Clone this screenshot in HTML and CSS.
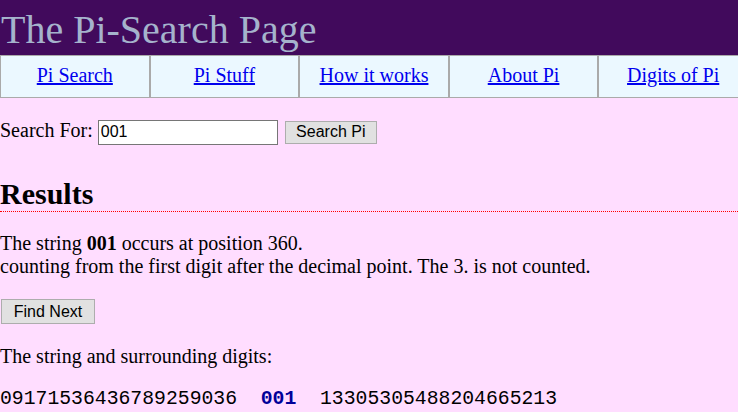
FILE: index.html
```html
<!DOCTYPE html>
<html>
<head>
<meta charset="utf-8">
<title>The Pi-Search Page</title>
<link rel="stylesheet" href="styles.css">
</head>
<body>
<div class="header"><h1 class="title">The Pi-Search Page</h1></div>
<div class="nav">
  <div class="navcell"><a href="#">Pi Search</a></div>
  <div class="navcell"><a href="#">Pi Stuff</a></div>
  <div class="navcell"><a href="#">How it works</a></div>
  <div class="navcell"><a href="#">About Pi</a></div>
  <div class="navcell"><a href="#">Digits of Pi</a></div>
</div>
<form class="search">Search For: <input class="field" type="text" value="001"> <button class="btn btn-search" type="button">Search Pi</button></form>
<h2 class="results">Results</h2>
<p class="text">The string <b>001</b> occurs at position 360.<br>counting from the first digit after the decimal point. The 3. is not counted.</p>
<p class="text text-btn"><button class="btn btn-next" type="button">Find Next</button></p>
<p class="text">The string and surrounding digits:</p>
<p class="digits">09171536436789259036  <b class="hit">001</b>  13305305488204665213</p>
</body>
</html>
```
FILE: styles.css
```css
html, body {
  margin: 0;
  padding: 0;
  overflow: hidden;
}
body {
  background: #ffddff;
  font-family: "Liberation Serif", "Times New Roman", serif;
  font-size: 20px;
  color: #000;
}
.header {
  background: #410a5c;
  height: 55px;
  box-sizing: border-box;
  padding: 7px 0 0 1px;
}
.title {
  margin: 0;
  font-size: 40px;
  font-weight: normal;
  color: #a5b3cc;
  line-height: 46px;
}
.nav {
  display: flex;
  overflow: hidden;
  width: 100%;
}
.navcell {
  flex: none;
  width: 20%;
  border: 1px solid #aaaaaa;
  background: #ebf8ff;
  text-align: center;
  padding: 8px 0 10px;
  line-height: 23px;
}
.navcell a {
  color: #0000ee;
}
.search {
  margin: 21px 0 32px;
}
.field {
  box-sizing: border-box;
  width: 180px;
  height: 25px;
  border: 1px solid #767676;
  background: #fff;
  padding: 1px 2px;
  font-family: "Liberation Sans", Arial, sans-serif;
  font-size: 16px;
  color: #000;
  vertical-align: baseline;
}
.btn {
  box-sizing: border-box;
  background: #e1e1e1;
  border: 1px solid #adadad;
  font-family: "Liberation Sans", Arial, sans-serif;
  font-size: 16px;
  color: #000;
  padding: 0;
  margin: 0;
}
.btn-search {
  width: 92px;
  height: 23px;
  margin-left: 2px;
}
.btn-next {
  width: 94px;
  height: 25px;
  margin-left: 1px;
}
.results {
  font-size: 30px;
  font-weight: bold;
  margin: 24px 0 20px;
  border-bottom: 1px dotted #ff0000;
}
.text {
  margin: 20px 0;
}
.text-btn {
  margin: 21px 0 21px;
}
.digits {
  margin: 20px 0;
  font-family: "Liberation Mono", "Courier New", monospace;
  font-size: 19.75px;
  white-space: pre;
}
.hit {
  color: #000099;
}
```
